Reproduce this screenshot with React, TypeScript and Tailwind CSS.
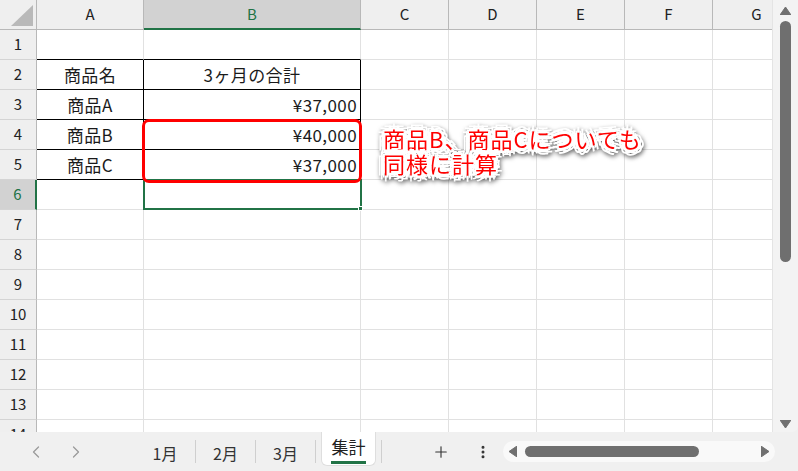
import { ChevronLeft, ChevronRight, Plus, EllipsisVertical } from "lucide-react";

const cols = [
  { label: "A", w: "w-[107px]" },
  { label: "B", w: "w-[217px]" },
  { label: "C", w: "w-[88px]" },
  { label: "D", w: "w-[88px]" },
  { label: "E", w: "w-[88px]" },
  { label: "F", w: "w-[88px]" },
  { label: "G", w: "w-[88px]" },
];

// 商品データ（A列 / B列）
const data: Record<number, [string, string]> = {
  2: ["商品名", "3ヶ月の合計"],
  3: ["商品A", "¥37,000"],
  4: ["商品B", "¥40,000"],
  5: ["商品C", "¥37,000"],
};

const rowNums = Array.from({ length: 14 }, (_, i) => i + 1);

function HeaderRow() {
  return (
    <div className="flex h-[30px] shrink-0 text-[15px] text-[#222]">
      <div className="relative w-[37px] shrink-0 bg-[#efefef] border-r border-b border-[#b8b8b8]">
        <svg className="absolute left-[11px] top-[5px]" width="22" height="21" viewBox="0 0 22 21">
          <polygon points="22,0 22,21 0,21" fill="#b9b9b9" />
        </svg>
      </div>
      {cols.map((c) =>
        c.label === "B" ? (
          <div
            key={c.label}
            className={`${c.w} shrink-0 flex items-center justify-center bg-[#d2d2d2] text-[#217346] border-r border-r-[#b8b8b8] border-b-2 border-b-[#217346]`}
          >
            {c.label}
          </div>
        ) : (
          <div
            key={c.label}
            className={`${c.w} shrink-0 flex items-center justify-center bg-[#efefef] border-r border-b border-[#b8b8b8]`}
          >
            {c.label}
          </div>
        )
      )}
    </div>
  );
}

function Row({ n }: { n: number }) {
  const sel = n === 6;
  const vals = data[n];
  return (
    <div className="flex h-[30px] shrink-0">
      {sel ? (
        <div className="w-[37px] shrink-0 flex items-center justify-center text-[15px] bg-[#d2d2d2] text-[#217346] border-r-2 border-r-[#217346] border-b border-b-[#d4d4d4]">
          {n}
        </div>
      ) : (
        <div className="w-[37px] shrink-0 flex items-center justify-center text-[15px] text-[#222] bg-[#efefef] border-r border-r-[#b8b8b8] border-b border-b-[#d4d4d4]">
          {n}
        </div>
      )}
      {cols.map((c, ci) => {
        const bottomBlack = n >= 1 && n <= 5 && ci <= 1;
        const rightBlack = n >= 2 && n <= 5 && ci <= 1;
        const text = vals && ci <= 1 ? vals[ci] : "";
        const alignRight = n >= 3 && ci === 1;
        return (
          <div
            key={c.label}
            className={`${c.w} shrink-0 flex items-center text-[17px] tracking-[0.4px] text-[#1a1a1a] border-r border-b ${
              rightBlack ? "border-r-black" : "border-r-[#e1e1e1]"
            } ${bottomBlack ? "border-b-black" : "border-b-[#e1e1e1]"} ${
              alignRight ? "justify-end pr-[3px]" : "justify-center"
            }`}
          >
            {text}
          </div>
        );
      })}
    </div>
  );
}

function Triangle({ dir }: { dir: "up" | "down" | "left" | "right" }) {
  const pts =
    dir === "up"
      ? "5.5,0 11,8 0,8"
      : dir === "down"
      ? "0,0 11,0 5.5,8"
      : dir === "left"
      ? "8,0 8,11 0,5.5"
      : "0,0 8,5.5 0,11";
  const horiz = dir === "left" || dir === "right";
  return (
    <svg width={horiz ? 8 : 11} height={horiz ? 11 : 8} viewBox={horiz ? "0 0 8 11" : "0 0 11 8"}>
      <polygon points={pts} fill="#707070" strokeLinejoin="round" stroke="#707070" strokeWidth="1" />
    </svg>
  );
}

export default function App() {
  return (
    <div className="w-[798px] h-[471px] overflow-hidden bg-[#f0f0f0] flex flex-col font-['Noto_Sans_CJK_JP',sans-serif]">
      {/* シート本体 + 縦スクロールバー */}
      <div className="flex h-[432px] shrink-0">
        <div className="relative w-[772px] shrink-0 overflow-hidden bg-white flex flex-col">
          <HeaderRow />
          {rowNums.map((n) => (
            <Row key={n} n={n} />
          ))}

          {/* アクティブセル B6 */}
          <div className="absolute left-[143px] top-[179px] w-[219px] h-[31px] border-2 border-[#217346]" />
          <div className="absolute left-[358px] top-[206px] w-[5px] h-[5px] bg-[#217346] border border-white" />

          {/* 赤枠 */}
          <div className="absolute left-[142px] top-[119px] w-[220px] h-[64px] border-[3px] border-[#ff0000] rounded-[7px]" />

          {/* 吹き出しテキスト */}
          <div className="absolute left-[383px] top-[126px] [filter:drop-shadow(1px_2px_2px_rgba(0,0,0,0.6))]">
            <div className="text-[22px] leading-[25px] tracking-[1px] text-[#ff0000] whitespace-nowrap [text-shadow:3px_0_#fff,-3px_0_#fff,0_3px_#fff,0_-3px_#fff,2px_2px_#fff,-2px_-2px_#fff,2px_-2px_#fff,-2px_2px_#fff,6px_0_#fff,-6px_0_#fff,0_6px_#fff,0_-6px_#fff,4px_4px_#fff,-4px_-4px_#fff,4px_-4px_#fff,-4px_4px_#fff]">
              <div>商品B、商品Cについても</div>
              <div>同様に計算</div>
            </div>
          </div>
        </div>

        <div className="w-[26px] shrink-0 bg-[#f3f3f3] border-l border-[#e4e4e4] rounded-br-[6px] flex flex-col items-center pt-[7px] pb-[4px]">
          <Triangle dir="up" />
          <div className="mt-[6px] w-[11px] h-[241px] rounded-full bg-[#6f6f6f]" />
          <div className="flex-1" />
          <Triangle dir="down" />
        </div>
      </div>

      {/* シートタブ */}
      <div className="flex items-center h-[39px] text-[16px] text-[#333]">
        <ChevronLeft className="ml-[26px] text-[#9a9a9a]" size={20} strokeWidth={1.5} />
        <ChevronRight className="ml-[20px] text-[#9a9a9a]" size={20} strokeWidth={1.5} />

        <div className="ml-[49px] w-[60px] flex justify-center pt-[3px]">1月</div>
        <div className="w-px h-[23px] bg-[#cfcfcf]" />
        <div className="w-[59px] flex justify-center pt-[3px]">2月</div>
        <div className="w-px h-[23px] bg-[#cfcfcf]" />
        <div className="w-[59px] flex justify-center pt-[3px]">3月</div>
        <div className="w-px h-[23px] bg-[#cfcfcf]" />

        <div className="ml-[5px] self-start w-[55px] h-[34px] bg-white rounded-b-[6px] border-x border-b border-[#dedede] flex flex-col items-center pt-[3px] text-[#222] text-[17px]">
          <span className="leading-[24px]">集計</span>
          <div className="mt-[2px] w-[35px] h-[3px] bg-[#217346]" />
        </div>
        <div className="ml-[5px] w-px h-[23px] bg-[#cfcfcf]" />

        <Plus className="ml-[50px] text-[#333]" size={18} strokeWidth={1.5} />
        <EllipsisVertical className="ml-[25px] text-[#333]" size={16} strokeWidth={2.5} />

        <div className="ml-[12px] w-[272px] h-[21px] rounded-full bg-[#f9f9f9] flex items-center px-[6px]">
          <Triangle dir="left" />
          <div className="ml-[8px] w-[174px] h-[11px] rounded-full bg-[#6f6f6f]" />
          <div className="flex-1" />
          <Triangle dir="right" />
        </div>
      </div>
    </div>
  );
}
